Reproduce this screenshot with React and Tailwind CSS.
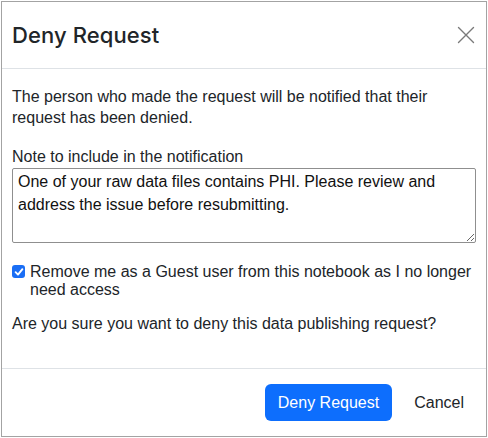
import React from "react";

const font = { fontFamily: '"Liberation Sans", Arial, sans-serif' };

function CloseIcon() {
  return (
    <svg width="18" height="18" viewBox="0 0 18 18" fill="none">
      <path d="M1.5 1.5L16.5 16.5M16.5 1.5L1.5 16.5" stroke="#7a7a7a" strokeWidth="1.4" strokeLinecap="round" />
    </svg>
  );
}

function CheckedBox() {
  return (
    <span className="mt-[2px] flex h-[13px] w-[13px] shrink-0 items-center justify-center rounded-[3px] bg-[#1a6ef5]">
      <svg width="10" height="10" viewBox="0 0 10 10" fill="none">
        <path d="M1.6 5.2L4 7.6L8.4 2.2" stroke="white" strokeWidth="1.9" strokeLinecap="round" strokeLinejoin="round" />
      </svg>
    </span>
  );
}

export default function App() {
  return (
    <div className="h-[438px] w-[488px] bg-white p-px" style={font}>
      <div className="flex h-full w-full flex-col border border-[#a3a3a3] bg-white text-[#212529]">
        <div className="flex h-[67px] shrink-0 items-center justify-between border-b border-[#dee2e6] pl-[10px] pr-[8px]">
          <h1
            className="text-[22px] font-medium leading-[30px] tracking-[0.1px]"
            style={{ fontFamily: 'Inter, "Liberation Sans", sans-serif' }}
          >
            Deny Request
          </h1>
          <button className="flex h-[24px] w-[24px] items-center justify-center">
            <CloseIcon />
          </button>
        </div>

        <div className="flex flex-1 flex-col px-[10px] pt-[17px] text-[16px]">
          <p className="leading-[21px]">
            The person who made the request will be notified that their request has been denied.
          </p>
          <label className="mt-[18px] block leading-[21px]">Note to include in the notification</label>
          <textarea
            className="mt-[1px] h-[75px] w-full resize-y rounded-[2px] border border-[#8f8f8f] px-[5px] pt-[1px] text-[16px] leading-[23px] text-[#111] outline-none"
            style={font}
            defaultValue="One of your raw data files contains PHI. Please review and address the issue before resubmitting."
          />
          <div className="mt-[20px] flex gap-[5px]">
            <CheckedBox />
            <span className="leading-[18px]">
              Remove me as a Guest user from this notebook as I no longer need access
            </span>
          </div>
          <p className="mt-[14px] leading-[21px]">Are you sure you want to deny this data publishing request?</p>
        </div>

        <div className="flex h-[68px] shrink-0 items-center justify-end gap-[10px] border-t border-[#dee2e6] pr-[10px]">
          <button className="h-[37px] rounded-[6px] bg-[#0d6efd] px-[13px] text-[16px] text-white">Deny Request</button>
          <button className="h-[37px] px-[12px] text-[16px] text-[#212529]">Cancel</button>
        </div>
      </div>
    </div>
  );
}
